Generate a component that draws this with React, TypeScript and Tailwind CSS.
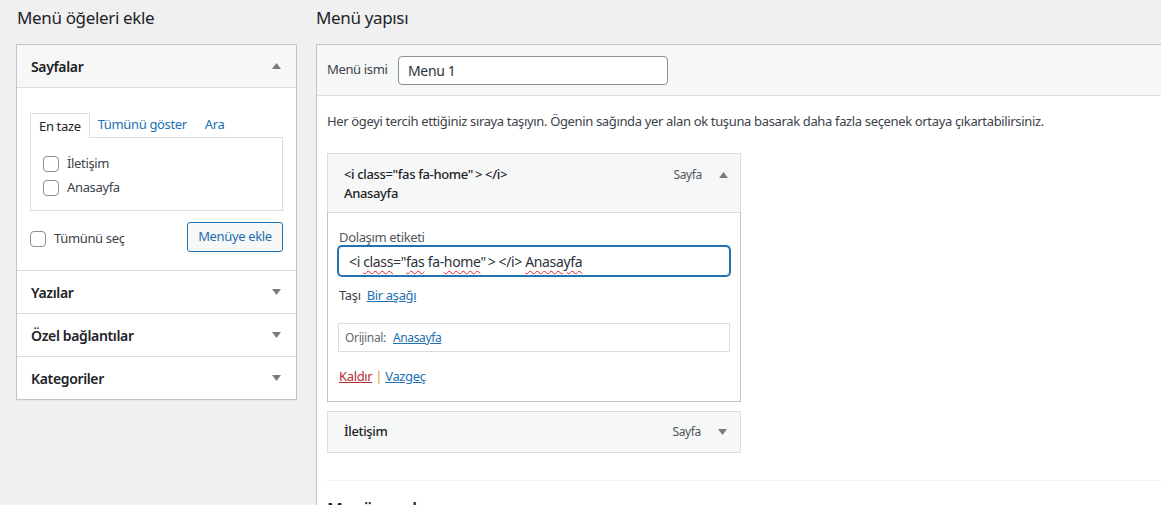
import React from "react";

const font = { fontFamily: '"Noto Sans", "Open Sans", sans-serif' };

function Tri({ up }: { up?: boolean }) {
  return (
    <svg width="9" height="6" viewBox="0 0 9 6" className="shrink-0">
      {up ? <path d="M0 6 L4.5 0 L9 6 Z" fill="#787c82" /> : <path d="M0 0 L9 0 L4.5 6 Z" fill="#787c82" />}
    </svg>
  );
}

function Box() {
  return <span className="inline-block w-[16px] h-[16px] rounded-[4px] border border-[#8c8f94] bg-white shrink-0" />;
}

function Section({ title }: { title: string }) {
  return (
    <div className="h-[43px] border-t border-[#dcdcde] flex items-center justify-between pl-[14px] pr-[15px]">
      <span className="text-[14px] font-semibold text-[#1d2327]">{title}</span>
      <Tri />
    </div>
  );
}

const sp = "underline decoration-wavy decoration-[#e02020] decoration-1 underline-offset-[3px]";

export default function App() {
  return (
    <div style={font} className="w-[1161px] h-[505px] overflow-hidden bg-[#f0f0f1] flex text-[#3c434a] tracking-[-0.35px]">
      {/* Left column */}
      <div className="ml-[16px] w-[281px] shrink-0">
        <h2 className="text-[17px] leading-[20px] pt-[8px] mb-[16px] ml-[1px] text-[#1d2327] font-normal">Menü öğeleri ekle</h2>
        <div className="border border-[#c3c4c7] bg-white shadow-[0_1px_1px_rgba(0,0,0,0.04)]">
          <div className="h-[43px] bg-[#f6f7f7] flex items-center justify-between pl-[14px] pr-[15px] border-b border-[#dcdcde]">
            <span className="text-[14px] font-semibold text-[#1d2327]">Sayfalar</span>
            <Tri up />
          </div>
          <div className="pt-[24px] px-[13px] pb-[18px]">
            <div className="flex text-[13px] h-[25px] items-stretch">
              <div className="px-[8px] border border-b-0 border-[#dcdcde] bg-white text-[#1d2327] flex items-center relative top-[1px] leading-[24px]">En taze</div>
              <div className="px-[8px] flex items-center text-[#2271b1]">Tümünü göster</div>
              <div className="px-[10px] flex items-center text-[#2271b1]">Ara</div>
            </div>
            <div className="border border-[#dcdcde] pt-[14px] pb-[10px] px-[12px] text-[13px] text-[#3c434a]">
              <div className="h-[24px] flex items-center gap-[8px]"><Box />İletişim</div>
              <div className="h-[24px] flex items-center gap-[8px]"><Box />Anasayfa</div>
            </div>
            <div className="flex items-center justify-between mt-[11px]">
              <div className="flex items-center gap-[8px] text-[13px] mt-[4px]"><Box />Tümünü seç</div>
              <button className="h-[30px] w-[96px] rounded-[3px] border border-[#2271b1] bg-[#f6f7f7] text-[#2271b1] text-[13px]">Menüye ekle</button>
            </div>
          </div>
          <Section title="Yazılar" />
          <Section title="Özel bağlantılar" />
          <Section title="Kategoriler" />
        </div>
      </div>

      {/* Right column */}
      <div className="ml-[19px] w-[900px] shrink-0">
        <h2 className="text-[17px] leading-[20px] pt-[8px] mb-[16px] text-[#1d2327] font-normal">Menü yapısı</h2>
        <div className="border border-[#c3c4c7] bg-white h-[600px]">
          <div className="h-[51px] bg-[#f6f7f7] border-b border-[#dcdcde] flex items-center pl-[10px]">
            <span className="text-[13px] text-[#3c434a] w-[71px]">Menü ismi</span>
            <div className="w-[270px] h-[29px] rounded-[4px] border border-[#8c8f94] bg-white flex items-center px-[9px] text-[14px] text-[#2c3338]">Menu 1</div>
          </div>
          <div className="pl-[10px]">
            <p className="text-[13px] leading-[20px] pt-[15px] text-[#3c434a]">
              Her ögeyi tercih ettiğiniz sıraya taşıyın. Ögenin sağında yer alan ok tuşuna basarak daha fazla seçenek ortaya çıkartabilirsiniz.
            </p>
            <div className="mt-[22px] w-[414px]">
              <div className="h-[60px] bg-[#f6f7f7] border border-[#dcdcde] flex justify-between pl-[16px] pr-[12px] pt-[11px]">
                <div className="text-[13px] leading-[19px] font-medium text-[#1d2327]">
                  <div>&lt;i class="fas fa-home"<span className="ml-[2px]">&gt;</span><span className="ml-[3px]">&lt;/i&gt;</span></div>
                  <div>Anasayfa</div>
                </div>
                <div className="flex items-start gap-[17px] pt-[1px]">
                  <span className="text-[12px] leading-[18px] text-[#50575e]">Sayfa</span>
                  <span className="pt-[6px]"><Tri up /></span>
                </div>
              </div>
              <div className="border border-t-0 border-[#c3c4c7] px-[10px] pt-[15px] pb-[16px]">
                <div className="text-[13px] leading-[18px] text-[#50575e] pl-[1px]">Dolaşım etiketi</div>
                <div className="h-[30px] rounded-[4px] border border-[#2271b1] shadow-[0_0_0_1px_#2271b1] bg-white flex items-center px-[10px] text-[14px] text-[#2c3338]">
                  <span className="whitespace-pre">
                    &lt;i <span className={sp}>class</span>="<span className={sp}>fas</span> fa-<span className={sp}>home</span>"<span className="ml-[2px]">&gt;</span><span className="ml-[3px]">&lt;/i&gt;</span>{" "}<span className={sp}>Anasayfa</span>
                  </span>
                </div>
                <div className="text-[13px] leading-[18px] mt-[10px] pl-[1px] text-[#3c434a]">
                  Taşı <a className="ml-[3px] text-[#2271b1] underline">Bir aşağı</a>
                </div>
                <div className="mt-[19px] h-[29px] border border-[#dcdcde] flex items-center px-[6px] text-[12px] text-[#646970]">
                  Orijinal:<a className="ml-[7px] text-[#2271b1] underline">Anasayfa</a>
                </div>
                <div className="mt-[15px] text-[13px] leading-[18px] pl-[1px]">
                  <a className="text-[#b32d2e] underline">Kaldır</a> <span className="text-[#dba617]">|</span> <a className="text-[#2271b1] underline">Vazgeç</a>
                </div>
              </div>
              <div className="mt-[9px] h-[42px] bg-[#f6f7f7] border border-[#dcdcde] flex items-center justify-between pl-[16px] pr-[13px]">
                <span className="text-[13px] font-medium text-[#1d2327]">İletişim</span>
                <div className="flex items-center gap-[17px]">
                  <span className="text-[12px] text-[#50575e]">Sayfa</span>
                  <Tri />
                </div>
              </div>
            </div>
            <div className="mt-[27px] border-t border-[#f0f0f1]" />
            <h3 className="mt-[19px] text-[17px] leading-[20px] font-semibold text-[#1d2327]">Menü ayarları</h3>
          </div>
        </div>
      </div>
    </div>
  );
}
